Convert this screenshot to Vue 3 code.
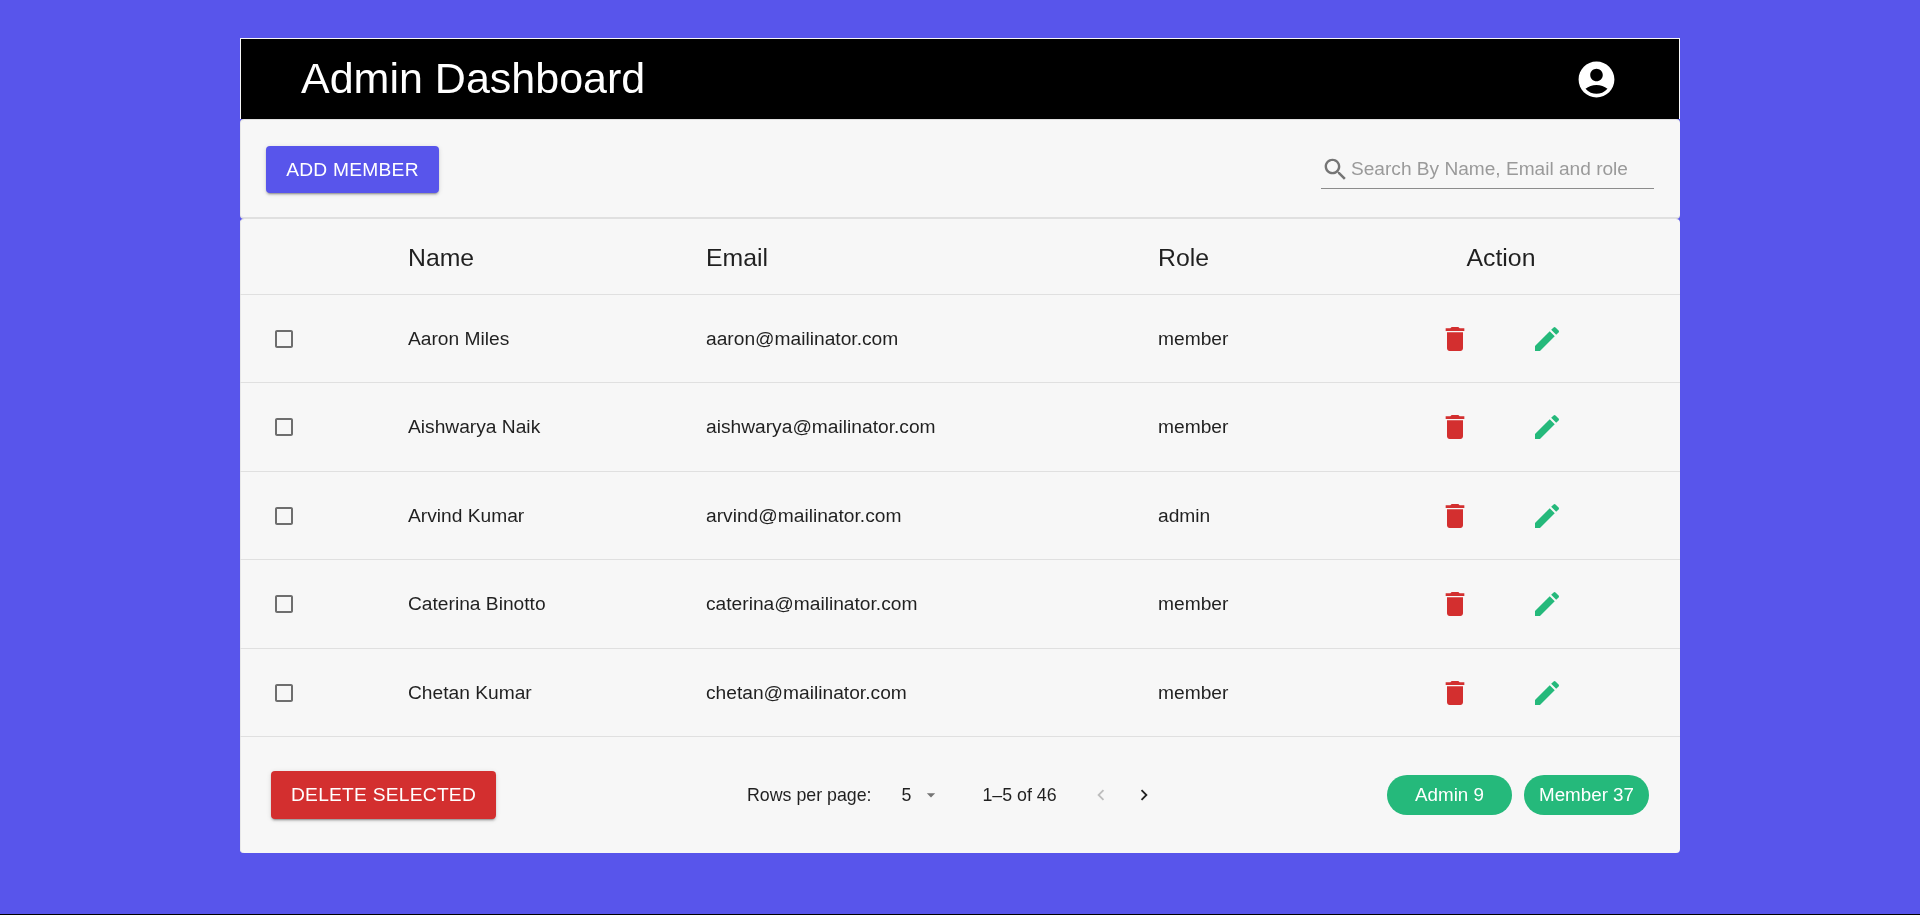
<template>
  <div class="page">
    <div class="panel">
      <header class="topbar">
        <h1>Admin Dashboard</h1>
        <svg class="account" viewBox="0 0 24 24"><path :d="icons.account" /></svg>
      </header>

      <section class="toolbar">
        <button class="btn add">Add Member</button>
        <label class="search">
          <svg viewBox="0 0 24 24"><path :d="icons.search" /></svg>
          <input type="text" placeholder="Search By Name, Email and role" />
        </label>
      </section>

      <section class="card">
        <table>
          <thead>
            <tr>
              <th class="col-check"></th>
              <th class="col-name">Name</th>
              <th class="col-email">Email</th>
              <th class="col-role">Role</th>
              <th class="col-action">Action</th>
            </tr>
          </thead>
          <tbody>
            <tr v-for="user in users" :key="user.email">
              <td class="check">
                <svg viewBox="0 0 24 24"><path :d="icons.box" /></svg>
              </td>
              <td>{{ user.name }}</td>
              <td>{{ user.email }}</td>
              <td>{{ user.role }}</td>
              <td>
                <div class="actions">
                  <svg class="trash" viewBox="0 0 24 24"><path :d="icons.trash" /></svg>
                  <svg class="pencil" viewBox="0 0 24 24"><path :d="icons.pencil" /></svg>
                </div>
              </td>
            </tr>
          </tbody>
        </table>

        <footer class="foot">
          <button class="btn delete">Delete Selected</button>
          <div class="pager">
            <span>Rows per page:</span>
            <span class="size">5</span>
            <svg class="caret" viewBox="0 0 24 24"><path d="M7 10l5 5 5-5z" /></svg>
            <span class="range">1–5 of 46</span>
            <svg class="arrow off" viewBox="0 0 24 24"><path :d="icons.left" /></svg>
            <svg class="arrow" viewBox="0 0 24 24"><path :d="icons.right" /></svg>
          </div>
          <div class="pills">
            <span class="pill">Admin 9</span>
            <span class="pill">Member 37</span>
          </div>
        </footer>
      </section>
    </div>
  </div>
</template>

<script setup>
const users = [
  { name: 'Aaron Miles', email: 'aaron@mailinator.com', role: 'member' },
  { name: 'Aishwarya Naik', email: 'aishwarya@mailinator.com', role: 'member' },
  { name: 'Arvind Kumar', email: 'arvind@mailinator.com', role: 'admin' },
  { name: 'Caterina Binotto', email: 'caterina@mailinator.com', role: 'member' },
  { name: 'Chetan Kumar', email: 'chetan@mailinator.com', role: 'member' }
];

const icons = {
  account: 'M12 2C6.48 2 2 6.48 2 12s4.48 10 10 10 10-4.48 10-10S17.52 2 12 2zm0 4c1.93 0 3.5 1.57 3.5 3.5S13.93 13 12 13s-3.5-1.57-3.5-3.5S10.07 6 12 6zm0 14c-2.03 0-4.43-.82-6.14-2.88C7.55 15.8 9.68 15 12 15s4.45.8 6.14 2.12C16.43 19.18 14.03 20 12 20z',
  search: 'M15.5 14h-.79l-.28-.27C15.41 12.59 16 11.11 16 9.5 16 5.91 13.09 3 9.5 3S3 5.91 3 9.5 5.91 16 9.5 16c1.61 0 3.09-.59 4.23-1.57l.27.28v.79l5 4.99L20.49 19l-4.99-5zm-6 0C7.01 14 5 11.99 5 9.5S7.01 5 9.5 5 14 7.01 14 9.5 11.99 14 9.5 14z',
  box: 'M19 5v14H5V5h14m0-2H5c-1.1 0-2 .9-2 2v14c0 1.1.9 2 2 2h14c1.1 0 2-.9 2-2V5c0-1.1-.9-2-2-2z',
  trash: 'M6 19c0 1.1.9 2 2 2h8c1.1 0 2-.9 2-2V7H6v12zM19 4h-3.5l-1-1h-5l-1 1H5v2h14V4z',
  pencil: 'M3 17.25V21h3.75L17.81 9.94l-3.75-3.75L3 17.25zM20.71 7.04c.39-.39.39-1.02 0-1.41l-2.34-2.34a.9959.9959 0 0 0-1.41 0l-1.83 1.83 3.75 3.75 1.83-1.83z',
  left: 'M15.41 16.59L10.83 12l4.58-4.59L14 6l-6 6 6 6 1.41-1.41z',
  right: 'M8.59 16.59L13.17 12 8.59 7.41 10 6l6 6-6 6-1.41-1.41z'
};
</script>

<style>
html,
body {
  background: #000;
}
</style>

<style scoped>
.page {
  height: 914px;
  box-sizing: border-box;
  padding-top: 38px;
  background: #5855eb;
  font-family: "Liberation Sans", Arial, sans-serif;
  color: rgba(0, 0, 0, 0.87);
}

.panel {
  width: 1440px;
  margin: 0 auto;
  will-change: transform;
}

.topbar {
  height: 81px;
  box-sizing: border-box;
  border: 1px solid #f7f7f7;
  border-bottom: 0;
  background: #000;
  color: #fff;
  display: flex;
  align-items: center;
  justify-content: space-between;
  padding: 0 61px 0 60px;
}

.topbar h1 {
  margin: -2px 0 0;
  font-size: 43px;
  font-weight: 400;
}

.account {
  width: 43px;
  height: 43px;
  fill: #fff;
}

.toolbar {
  height: 100px;
  box-sizing: border-box;
  border-top: 1px solid #e0e0e0;
  border-bottom: 2px solid #e0e0e0;
  border-radius: 4px;
  background: #f7f7f7;
  box-shadow: inset 1px 0 0 #e8e8e8;
  display: flex;
  align-items: center;
  justify-content: space-between;
  padding: 0 26px;
}

.btn {
  border: 0;
  border-radius: 4px;
  color: #fff;
  font-family: inherit;
  font-size: 19.2px;
  letter-spacing: 0.25px;
  text-transform: uppercase;
  box-shadow: 0 3px 1px -2px rgba(0, 0, 0, 0.2), 0 2px 2px 0 rgba(0, 0, 0, 0.14), 0 1px 5px 0 rgba(0, 0, 0, 0.12);
}

.add {
  width: 173px;
  height: 47px;
  margin-top: 2px;
  background: #5855eb;
}

.delete {
  width: 225px;
  height: 48px;
  background: #d32f2f;
}

.search {
  width: 333px;
  height: 44px;
  box-sizing: border-box;
  border-bottom: 1px solid #8c8c8c;
  padding-top: 5px;
  display: flex;
  align-items: center;
  gap: 1px;
  margin-top: -3px;
}

.search svg {
  width: 29px;
  height: 29px;
  flex: none;
  fill: #757575;
}

.search input {
  flex: 1;
  min-width: 0;
  border: 0;
  outline: 0;
  padding: 0;
  background: transparent;
  font-family: inherit;
  font-size: 19.1px;
}

.search input::placeholder {
  color: #9a9a9a;
  opacity: 1;
}

.card {
  border-radius: 4px;
  background: #f7f7f7;
  box-shadow: inset 1px 0 0 #e8e8e8;
  overflow: hidden;
}

table {
  width: 100%;
  border-collapse: collapse;
  table-layout: fixed;
}

th,
td {
  box-sizing: border-box;
  padding: 1px 16px 0;
  border-bottom: 1px solid #e0e0e0;
}

th {
  height: 75px;
  padding-top: 3px;
  font-size: 24.8px;
  font-weight: 400;
  text-align: left;
}

.col-check { width: 152px; }
.col-name { width: 298px; }
.col-email { width: 452px; }
.col-role { width: 180px; }
th.col-action { text-align: center; }

td {
  height: 88px;
  font-size: 19.2px;
}

tbody tr:nth-child(even) td {
  height: 89px;
}

td.check {
  padding-left: 32px;
}

.check svg {
  display: block;
  width: 24px;
  height: 24px;
  fill: #6e6e6e;
}

.actions {
  display: flex;
  justify-content: center;
  gap: 60px;
}

.actions svg {
  width: 32px;
  height: 32px;
}

.trash { fill: #d32f2f; }
.pencil { fill: #25b97b; }

.foot {
  height: 116px;
  box-sizing: border-box;
  padding: 1px 31px 0;
  display: flex;
  align-items: center;
}

.pager {
  display: flex;
  align-items: center;
  margin-left: 251px;
  font-size: 17.8px;
}

.size {
  margin-left: 30px;
}

.caret {
  width: 20px;
  height: 20px;
  margin-left: 10px;
  fill: #757575;
}

.range {
  margin-left: 41px;
}

.arrow {
  width: 22px;
  height: 22px;
  fill: #212121;
}

.arrow.off {
  margin-left: 33px;
  fill: #bdbdbd;
}

.arrow + .arrow {
  margin-left: 21px;
}

.pills {
  margin-left: auto;
  display: flex;
  gap: 12px;
}

.pill {
  width: 125px;
  height: 40px;
  border-radius: 20px;
  background: #25b97b;
  color: #fff;
  font-size: 18.8px;
  display: flex;
  align-items: center;
  justify-content: center;
}
</style>
